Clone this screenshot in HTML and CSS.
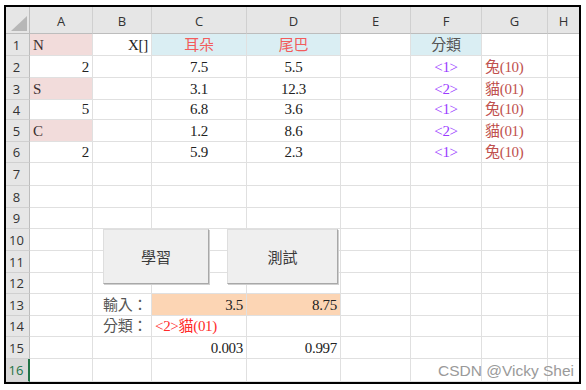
FILE: index.html
```html
<!DOCTYPE html>
<html lang="zh-Hant">
<head>
    <meta charset="UTF-8">
    <title>KNN 分類</title>
    <link rel="stylesheet" href="styles.css">
</head>
<body>
    <div class="frame">
        <div class="sheet" id="sheet"></div>
        <div class="sheet overlay">
            <div class="buttons">
                <button class="btn learn">學習</button>
                <button class="btn test">測試</button>
            </div>
        </div>
        <div class="watermark">CSDN @Vicky Shei</div>
    </div>
    <script>
        const cols = ["A", "B", "C", "D", "E", "F", "G", "H"];
        const rows = 16;

        // cell text and classes
        const cells = {
            A1: ["N", "pink"], B1: ["X[]", "r"], C1: ["耳朵", "blue c ear"], D1: ["尾巴", "blue c ear"], F1: ["分類", "blue c label"],
            A2: ["2", "r"], C2: ["7.5", "c"], D2: ["5.5", "c"], F2: ["<1>", "c purple"], G2: ["兔(10)", "brown"],
            A3: ["S", "pink"], C3: ["3.1", "c"], D3: ["12.3", "c"], F3: ["<2>", "c purple"], G3: ["貓(01)", "brown"],
            A4: ["5", "r"], C4: ["6.8", "c"], D4: ["3.6", "c"], F4: ["<1>", "c purple"], G4: ["兔(10)", "brown"],
            A5: ["C", "pink"], C5: ["1.2", "c"], D5: ["8.6", "c"], F5: ["<2>", "c purple"], G5: ["貓(01)", "brown"],
            A6: ["2", "r"], C6: ["5.9", "c"], D6: ["2.3", "c"], F6: ["<1>", "c purple"], G6: ["兔(10)", "brown"],
            B13: ["輸入：", "label indent"], C13: ["3.5", "r peach"], D13: ["8.75", "r peach"],
            B14: ["分類：", "label indent"], C14: ["<2>貓(01)", "alert"],
            C15: ["0.003", "r"], D15: ["0.997", "r"]
        };

        const sheet = document.getElementById("sheet");

        function add(cls, text) {
            const div = document.createElement("div");
            div.className = cls;
            if (text) div.textContent = text;
            sheet.appendChild(div);
            return div;
        }

        const corner = add("corner");
        corner.innerHTML = '<svg width="18" height="16" viewBox="0 0 18 16"><polygon points="17,0 17,15 1,15" fill="#b7b7b7"/></svg>';
        cols.forEach(c => add(c === "H" ? "colhead end" : "colhead", c));

        for (let r = 1; r <= rows; r++) {
            add(r === 16 ? "rowhead sel" : "rowhead", String(r));
            cols.forEach(c => {
                const cell = cells[c + r];
                let cls = cell ? "cell " + cell[1] : "cell";
                if (c === "H") cls += " end";
                add(cls, cell ? cell[0] : "");
            });
        }
    </script>
</body>
</html>
```

FILE: styles.css
```css
body {
    margin: 0;
    background: #fff;
}
.frame {
    position: relative;
    display: grid;
    margin: 5px 0 0 4px;
    width: 573px;
    height: 375px;
    border: 2px solid #000;
}
.sheet {
    grid-area: 1 / 1;
    display: grid;
    grid-template-columns: 24px 63px 59px 95px 94px 70px 71px 66px 31px;
    grid-template-rows: 27px 22px 22px 22px 20px 22px 21px 23px 22px 21px 22px 22px 21px 22px 21px 22px 23px;
    font-family: "Liberation Serif", "Noto Sans CJK TC", serif;
    font-size: 15px;
    color: #222;
}
.overlay {
    pointer-events: none;
}
.corner {
    background: #e6e6e6;
    border-right: 1px solid #bdbdbd;
    border-bottom: 1px solid #bdbdbd;
    display: flex;
    align-items: flex-end;
    justify-content: flex-end;
    padding: 0 1px 1px 0;
}
.corner svg {
    display: block;
}
.colhead {
    background: #e6e6e6;
    border-right: 1px solid #d0d0d0;
    border-bottom: 1px solid #bdbdbd;
    display: flex;
    align-items: center;
    justify-content: center;
    font-family: "Open Sans", "Liberation Sans", sans-serif;
    font-size: 13px;
    color: #333;
    padding-top: 2px;
}
.colhead.end {
    border-right: none;
}
.rowhead {
    background: #e6e6e6;
    border-right: 1px solid #bdbdbd;
    border-bottom: 1px solid #d0d0d0;
    display: flex;
    align-items: center;
    justify-content: center;
    font-family: "Open Sans", "Liberation Sans", sans-serif;
    font-size: 13px;
    color: #333;
    padding-right: 2px;
}
.rowhead.sel {
    color: #217346;
    background: #d9d9d9;
    border-right: 2px solid #217346;
}
.cell {
    border-right: 1px solid #e0e0e0;
    border-bottom: 1px solid #e0e0e0;
    display: flex;
    align-items: flex-end;
    justify-content: flex-start;
    padding: 0 3px 1px;
    line-height: 17px;
    white-space: nowrap;
    letter-spacing: -0.3px;
}
.cell.end {
    border-right: none;
}
.cell.r {
    justify-content: flex-end;
}
.cell.c {
    justify-content: center;
}
.cell.indent {
    padding-left: 10px;
}
.pink {
    background: #f2dcdb;
    color: #3c2f2f;
}
.blue {
    background: #daeef3;
}
.peach {
    background: #fcd5b4;
}
.ear {
    color: #f25c5c;
}
.label {
    color: #555;
}
.purple {
    color: #9b3cff;
}
.brown {
    color: #c0504d;
}
.alert {
    color: #ff2a2a;
}
.buttons {
    grid-column: 3 / 6;
    grid-row: 11 / 14;
    display: flex;
    align-items: flex-start;
    gap: 18px;
    padding-left: 10px;
}
.btn {
    height: 55px;
    background: #efefef;
    border: 1px solid #dedede;
    border-right-color: #a8a8a8;
    border-bottom-color: #a8a8a8;
    box-shadow: 1px 1px 0 #cfcfcf;
    font-family: "Noto Sans CJK TC", sans-serif;
    font-size: 15px;
    color: #3a3a3a;
    padding: 0;
    pointer-events: auto;
}
.learn {
    width: 106px;
}
.test {
    width: 111px;
}
.watermark {
    position: absolute;
    right: 5px;
    bottom: 2px;
    font-family: "Liberation Sans", Arial, sans-serif;
    font-size: 15.5px;
    color: #9a9a9a;
    text-shadow: 0 0 1px #fff;
}
```
